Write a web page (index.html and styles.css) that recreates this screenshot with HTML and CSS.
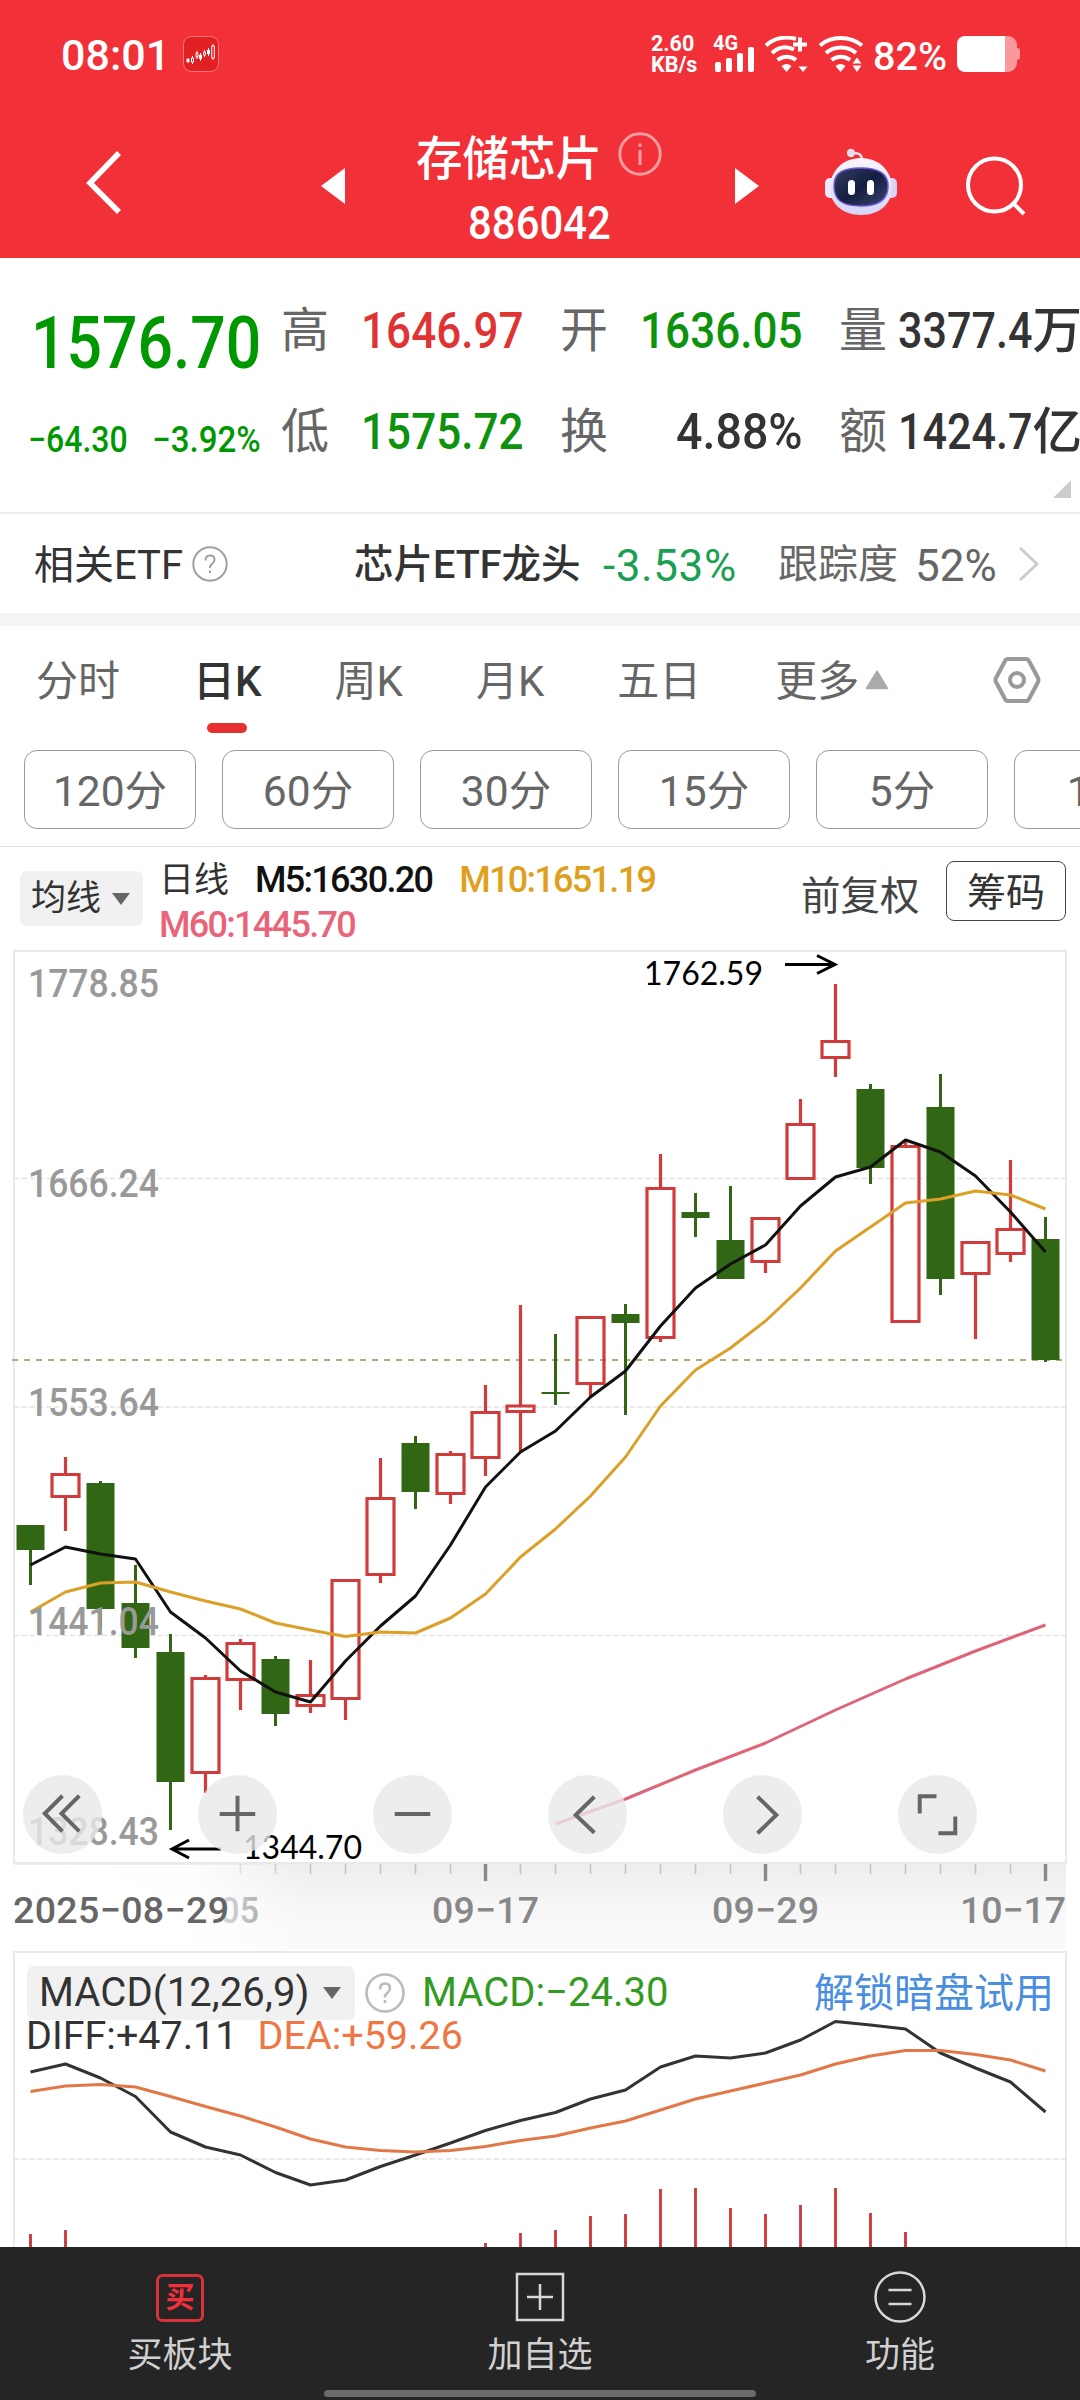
FILE: index.html
```html
<!DOCTYPE html>
<html lang="zh-CN">
<head>
    <meta charset="UTF-8">
    <meta name="viewport" content="width=device-width, initial-scale=1.0">
    <title>存储芯片 886042</title>
    <link rel="stylesheet" href="styles.css">
</head>
<body>
    <header class="header">
        <div class="status">
            <span class="status-time">08:01</span>
            <svg class="status-app" width="36" height="36" viewBox="0 0 36 36">
                <rect x="0.5" y="0.5" width="35" height="35" rx="8" fill="#e21f22" stroke="#f8767a"/>
                <path d="M5 22v5M9.500 20v8M14 15v8M17.500 17v8M21.500 14v7M25.500 12v8M30 8v16" stroke="#fff" stroke-width="1"/>
                <path d="M3.500 23h3v3h-3zM16 19h3v4h-3zM24 14h3v4h-3z" fill="#fff"/>
                <path d="M8.500 22h2v4h-2zM13 17h2v4h-2zM20.500 16h2v3h-2zM28.700 10h2.600v12h-2.600z" fill="#e21f22" stroke="#fff"/>
            </svg>
            <div class="status-right">
                <div class="net-speed"><span>2.60</span><span>KB/s</span></div>
                <div class="mobile">
                    <span class="mobile-type">4G</span>
                    <svg width="42" height="36" viewBox="0 0 42 36" fill="#fff">
                        <rect x="2" y="26" width="6" height="10" rx="2"/>
                        <rect x="13" y="22" width="6" height="14" rx="2"/>
                        <rect x="24" y="17" width="6" height="19" rx="2"/>
                        <rect x="35" y="11" width="6" height="25" rx="2"/>
                    </svg>
                </div>
                <svg class="wifi" width="44" height="36" viewBox="0 0 44 36">
                    <g fill="none" stroke="#fff" stroke-width="4">
                        <path d="M1 9.500C9 1.500 22 0 31 3"/>
                        <path d="M7 17C14 10.500 22 10 29 13.500"/>
                        <path d="M12.500 24C18 19.500 26 19.500 31 24"/>
                        <path d="M35 1.500v14M28 8.500h14"/>
                    </g>
                    <path d="M16.500 30q5-4 10 0l-5 6z" fill="#fff"/>
                    <path d="M33.500 30.500h9l-4.500 5.500z" fill="#fff"/>
                </svg>
                <svg class="wifi" width="44" height="36" viewBox="0 0 44 36">
                    <g fill="none" stroke="#fff" stroke-width="4">
                        <path d="M1 9.500C12-0.500 31-0.500 43 9.500"/>
                        <path d="M7 17C15 9.500 29 9.500 37 17"/>
                        <path d="M12.500 24C18 19.500 26 19.500 31 24"/>
                    </g>
                    <path d="M16.500 30q5-4 10 0l-5 6z" fill="#fff"/>
                    <path d="M33.500 29.500h9l-4.500 6.500zM33.500 27.500h9l-4.500-6z" fill="#fff"/>
                </svg>
                <span class="battery-text">82%</span>
                <svg width="63" height="36" viewBox="0 0 63 36">
                    <path d="M48 0h3a9 9 0 0 1 9 9v3q3 0 3 3v6q0 3-3 3v3a9 9 0 0 1-9 9h-3z" fill="#fa989b"/>
                    <path d="M48 0H8a8 8 0 0 0-8 8v20a8 8 0 0 0 8 8h40z" fill="#fff"/>
                </svg>
            </div>
        </div>
        <nav class="nav">
            <svg class="nav-back" width="38" height="66" viewBox="0 0 38 66"><path d="M33 3L4 33l29 29" fill="none" stroke="#fff" stroke-width="5.500"/></svg>
            <svg class="nav-prev" width="24" height="36" viewBox="0 0 24 36"><path d="M24 0v36L0 18z" fill="#fff"/></svg>
            <div class="nav-title">
                <div class="nav-name">存储芯片
                    <svg width="44" height="44" viewBox="0 0 44 44" fill="none" stroke="#fa9da0" stroke-width="3">
                        <circle cx="22" cy="22" r="20.200"/>
                        <path d="M22 18v15M22 11.500v3.500"/>
                    </svg>
                </div>
                <div class="nav-code"><span class="num">886042</span></div>
            </div>
            <svg class="nav-next" width="24" height="36" viewBox="0 0 24 36"><path d="M0 0v36l24-18z" fill="#fff"/></svg>
            <svg class="nav-robot" width="72" height="68" viewBox="0 0 72 68">
                <defs>
                    <linearGradient id="head" x1="0" y1="0" x2="0" y2="1"><stop offset="0" stop-color="#fbf6fb"/><stop offset="1" stop-color="#d3d6f4"/></linearGradient>
                    <linearGradient id="face" x1="0" y1="0" x2="1" y2="1"><stop offset="0" stop-color="#363c60"/><stop offset="0.500" stop-color="#141e40"/><stop offset="1" stop-color="#3d446e"/></linearGradient>
                </defs>
                <path d="M27 5q10-1 10 7" fill="none" stroke="#f3dfe8" stroke-width="2.500"/>
                <circle cx="26" cy="5" r="4.200" fill="#e9dcec"/>
                <rect x="0" y="30" width="12" height="20" rx="5" fill="#eeeafc"/>
                <rect x="60" y="30" width="12" height="20" rx="5" fill="#d9d3f4"/>
                <path d="M36 10C55 10 67 24 67 40S54 67 36 67 5 56 5 40 17 10 36 10z" fill="url(#head)"/>
                <path d="M36 20C53 20 63 25 63 38S55 58 36 58 9 52 9 38 19 20 36 20z" fill="url(#face)" stroke="#6a58d8" stroke-width="1.500"/>
                <rect x="23" y="32" width="7" height="15" rx="3.500" fill="#fff"/>
                <rect x="42" y="32" width="7" height="15" rx="3.500" fill="#fff"/>
            </svg>
            <svg class="nav-search" width="60" height="62" viewBox="0 0 60 62" fill="none" stroke="#fff" stroke-width="4">
                <circle cx="28.500" cy="31" r="26.500"/>
                <path d="M48 50l10 10"/>
            </svg>
        </nav>
    </header>

    <section class="quote">
        <div class="quote-main">
            <div class="quote-price"><span class="num">1576.70</span></div>
            <div class="quote-change">
                <span class="num">−64.30</span>
                <span class="num">−3.92%</span>
            </div>
        </div>
        <div class="quote-grid">
            <div class="cell"><span class="label">高</span><span class="value up"><span class="num">1646.97</span></span></div>
            <div class="cell"><span class="label">开</span><span class="value down"><span class="num">1636.05</span></span></div>
            <div class="cell"><span class="label">量</span><span class="value"><span class="num narrow">3377.4</span>万</span></div>
            <div class="cell"><span class="label">低</span><span class="value down"><span class="num">1575.72</span></span></div>
            <div class="cell"><span class="label">换</span><span class="value"><span class="num wide">4.88%</span></span></div>
            <div class="cell"><span class="label">额</span><span class="value"><span class="num narrow">1424.7</span>亿</span></div>
        </div>
        <i class="quote-more"></i>
    </section>

    <section class="etf">
        <span class="etf-label">相关ETF</span>
        <svg class="etf-help" width="36" height="36" viewBox="0 0 36 36" fill="none" stroke="#a0a0a0" stroke-width="2">
            <circle cx="18" cy="18" r="16.700"/>
            <path d="M13.500 14.500q0-5 4.500-5t4.500 4.200q0 2.300-2.500 4.300t-2 4M18 24.500v2.500"/>
        </svg>
        <span class="etf-name">芯片ETF龙头</span>
        <span class="etf-rate">-3.53%</span>
        <span class="etf-track">跟踪度</span>
        <span class="etf-percent">52%</span>
        <svg class="etf-arrow" width="22" height="36" viewBox="0 0 22 36"><path d="M2 2l17 16L2 34" fill="none" stroke="#ccc" stroke-width="3"/></svg>
    </section>

    <section class="tabs">
        <span class="tab">分时</span>
        <span class="tab active">日K</span>
        <span class="tab">周K</span>
        <span class="tab">月K</span>
        <span class="tab">五日</span>
        <span class="tab tab-more">更多<svg width="24" height="20" viewBox="0 0 22 19"><path d="M11 1l10 16.500H1z" fill="#aaa" stroke="#aaa" stroke-width="1.500" stroke-linejoin="round"/></svg></span>
        <svg class="tabs-setting" width="50" height="48" viewBox="0 0 50 48" fill="none" stroke="#999" stroke-width="4" stroke-linejoin="round">
            <path d="M16 3h18q2 0 3 2l9 17q1 2 0 4l-9 17q-1 2-3 2H16q-2 0-3-2L4 26q-1-2 0-4l9-17q1-2 3-2z"/>
            <circle cx="25" cy="24" r="7"/>
        </svg>
    </section>

    <section class="periods">
        <span class="period">120分</span>
        <span class="period">60分</span>
        <span class="period">30分</span>
        <span class="period">15分</span>
        <span class="period">5分</span>
        <span class="period">1分</span>
    </section>

    <section class="ma">
        <div class="ma-select">均线<i class="caret"></i></div>
        <div class="ma-values">
            <span class="ma-title">日线</span><span class="m5">M5:1630.20</span><span class="m10">M10:1651.19</span>
            <br>
            <span class="m60">M60:1445.70</span>
        </div>
        <span class="ma-adjust">前复权</span>
        <span class="ma-chip">筹码</span>
    </section>

    <section class="kline">
        <svg class="chart" width="1080" height="1001" viewBox="0 950 1080 1001">
            <defs>
                <linearGradient id="axisDown" x1="0" y1="0" x2="0" y2="1"><stop offset="0" stop-color="#ededed"/><stop offset="0.500" stop-color="#f7f7f7"/><stop offset="1" stop-color="#fbfbfb"/></linearGradient>
                <linearGradient id="axisFade" x1="0" y1="0" x2="1" y2="0"><stop offset="0" stop-color="#fff"/><stop offset="0.600" stop-color="#fff" stop-opacity="0.950"/><stop offset="1" stop-color="#fff" stop-opacity="0"/></linearGradient>
            </defs>
            <rect class="frame" x="14" y="951" width="1052" height="912"/>
            <path class="grid" d="M14 1178.500H1066M14 1407H1066M14 1635.500H1066"/>
            <path class="last-price" d="M12 1360H1066"/>

            <!-- 阴线 -->
            <path class="fall-wick" d="M30.500 1550V1585M100.500 1481V1628M135.500 1565V1658M170.500 1634V1830M275.500 1656V1726M415.500 1436V1509M555.500 1334V1405M625.500 1304V1415M695.500 1193V1237M730.500 1186V1279M870.500 1084V1184M940.500 1074V1295M1045.500 1217V1362"/>
            <path class="fall-body" d="M16.500 1525h28v25h-28zM86.500 1483h28v126h-28zM121.500 1603h28v45h-28zM156.500 1652h28v130h-28zM261.500 1659h28v55h-28zM401.500 1443h28v49h-28zM541.500 1392h28v2h-28zM611.500 1314h28v9h-28zM681.500 1212h28v6h-28zM716.500 1240h28v39h-28zM856.500 1089h28v79h-28zM926.500 1107h28v172h-28zM1031.500 1239h28v121h-28z"/>
            <!-- 阳线 -->
            <path class="rise" d="M65.500 1457V1473M65.500 1498V1531M205.500 1675V1678M205.500 1774V1793M240.500 1639V1642M240.500 1681V1710M310.500 1660V1694M310.500 1707V1713M345.500 1700V1720M380.500 1458V1497M380.500 1576V1583M450.500 1451V1453M450.500 1495V1504M485.500 1385V1411M485.500 1458V1476M520.500 1305V1405M520.500 1413V1452M590.500 1385V1397M660.500 1154V1187M660.500 1339V1342M765.500 1263V1273M800.500 1099V1123M835.500 984V1040M835.500 1059V1077M905.500 1141V1145M975.500 1274V1339M1010.500 1160V1228M1010.500 1255V1262"/>
            <path class="rise" d="M52 1474.500h27v22h-27zM192 1678.500h27v94h-27zM227 1643.500h27v36h-27zM297 1695.500h27v10h-27zM332 1580.500h27v118h-27zM367 1498.500h27v76h-27zM437 1454.500h27v39h-27zM472 1412.500h27v45h-27zM507 1406h27v5.500h-27zM577 1317.500h27v66h-27zM647 1188.500h27v149h-27zM752 1218.500h27v43h-27zM787 1124.500h27v54h-27zM822 1041.500h27v16h-27zM892 1146.500h27v175h-27zM962 1242.500h27v31h-27zM997 1229.500h27v24h-27z"/>

            <polyline class="line ma5-line" points="30.500,1565 65.500,1547 100.500,1554 135.500,1559 170.500,1612 205.500,1638 240.500,1671 275.500,1692 310.500,1702 345.500,1661 380.500,1626 415.500,1596 450.500,1545 485.500,1487 520.500,1452 555.500,1431 590.500,1397 625.500,1371 660.500,1326 695.500,1288 730.500,1264 765.500,1245 800.500,1206 835.500,1177 870.500,1167 905.500,1140 940.500,1152 975.500,1176 1010.500,1212 1045.500,1252"/>
            <polyline class="line ma10-line" points="30.500,1612 65.500,1592 100.500,1583 135.500,1582 170.500,1592 205.500,1601 240.500,1609 275.500,1623 310.500,1630 345.500,1636.500 380.500,1632 415.500,1633 450.500,1618 485.500,1594 520.500,1557 555.500,1529 590.500,1496 625.500,1457 660.500,1406 695.500,1370 730.500,1348 765.500,1321 800.500,1288 835.500,1251 870.500,1227 905.500,1203 940.500,1199 975.500,1191 1010.500,1195 1045.500,1209"/>
            <polyline class="line ma60-line" points="555.500,1824 625.500,1799 695.500,1770 765.500,1743 835.500,1710 905.500,1679 975.500,1651 1045.500,1625"/>

            <g class="scale">
                <text x="28" y="997" textLength="131" lengthAdjust="spacingAndGlyphs">1778.85</text>
                <text x="28" y="1197" textLength="131" lengthAdjust="spacingAndGlyphs">1666.24</text>
                <text x="28" y="1415.500" textLength="131" lengthAdjust="spacingAndGlyphs">1553.64</text>
                <text x="28" y="1634.500" textLength="131" lengthAdjust="spacingAndGlyphs">1441.04</text>
                <text x="28" y="1844.500" textLength="131" lengthAdjust="spacingAndGlyphs">1328.43</text>
            </g>
            <g class="extreme">
                <text x="644" y="985" textLength="119" lengthAdjust="spacingAndGlyphs">1762.59</text>
                <text x="243" y="1858.500" textLength="119" lengthAdjust="spacingAndGlyphs">1344.70</text>
                <path d="M785 964.500H835M817 955.500L835 964.500L817 973.500M221 1849H172M189 1840L172 1849L189 1858"/>
            </g>

            <!-- 日期轴 -->
            <rect x="14" y="1864" width="1052" height="86" fill="url(#axisDown)"/>
            <path class="tick" d="M240.500 1864v10M275.500 1864v10M310.500 1864v10M345.500 1864v10M380.500 1864v10M415.500 1864v10M450.500 1864v10M520.500 1864v10M555.500 1864v10M590.500 1864v10M625.500 1864v10M660.500 1864v10M695.500 1864v10M730.500 1864v10M800.500 1864v10M835.500 1864v10M870.500 1864v10M905.500 1864v10M940.500 1864v10M975.500 1864v10M1010.500 1864v10"/>
            <path class="tick-main" d="M485.500 1864v17M765.500 1864v17M1045.500 1864v17"/>
            <g class="date">
                <text x="220" y="1922.500" textLength="39" lengthAdjust="spacingAndGlyphs">05</text>
                <text x="432" y="1922.500" textLength="107" lengthAdjust="spacing">09−17</text>
                <text x="712" y="1922.500" textLength="107" lengthAdjust="spacing">09−29</text>
                <text x="960" y="1922.500" textLength="106" lengthAdjust="spacing">10−17</text>
            </g>
            <rect x="12" y="1865" width="290" height="85" fill="url(#axisFade)"/>
            <text class="date-first" x="13" y="1922.500" textLength="216" lengthAdjust="spacing">2025−08−29</text>
        </svg>
        <div class="controls">
            <button class="control"><svg viewBox="0 0 80 80"><path d="M40 21L22 39l18 18M57 21L39 39l18 18"/></svg></button>
            <button class="control"><svg viewBox="0 0 80 80"><path d="M22 39.500h36M40 21v36"/></svg></button>
            <button class="control"><svg viewBox="0 0 80 80"><path d="M22 39.500h36"/></svg></button>
            <button class="control"><svg viewBox="0 0 80 80"><path d="M47 22L28 40.500l19 18"/></svg></button>
            <button class="control"><svg viewBox="0 0 80 80"><path d="M35 22l19 18.500L35 59"/></svg></button>
            <button class="control"><svg viewBox="0 0 80 80"><path d="M39 21.500H22V39M58 42v17H41"/></svg></button>
        </div>
    </section>

    <section class="macd">
        <div class="macd-head">
            <div class="macd-select">MACD(12,26,9)<i class="caret"></i></div>
            <svg class="macd-help" width="40" height="40" viewBox="0 0 40 40" fill="none" stroke="#bbb" stroke-width="2.600">
                <circle cx="20" cy="20" r="18.500"/>
                <path d="M15 16.500q0-6 5-6t5 4.700q0 2.500-2.700 4.800t-2.300 4.500M20 27v3"/>
            </svg>
            <span class="macd-value">MACD:−24.30</span>
            <span class="macd-link">解锁暗盘试用</span>
        </div>
        <div class="macd-sub"><span>DIFF:+47.11</span><span class="dea">DEA:+59.26</span></div>
        <svg class="macd-chart" width="1080" height="296" viewBox="0 1951 1080 296">
            <path class="frame" d="M14 2247V1952H1066V2247"/>
            <path class="grid" d="M14 2159H1066"/>
            <path class="bars" d="M30.500 2234V2247M65.500 2230V2247M485.500 2243V2247M520.500 2233V2247M555.500 2230V2247M590.500 2216V2247M625.500 2214V2247M660.500 2189V2247M695.500 2188V2247M730.500 2208V2247M765.500 2214V2247M800.500 2205V2247M835.500 2188V2247M870.500 2213V2247M905.500 2232V2247"/>
            <polyline class="line diff-line" points="30.500,2072 65.500,2064 100.500,2078 135.500,2096.500 170.500,2132 205.500,2147 240.500,2155 275.500,2172.500 310.500,2185 345.500,2180 380.500,2166.500 415.500,2155 450.500,2143 485.500,2130.500 520.500,2120.500 555.500,2112.500 590.500,2099 625.500,2090 660.500,2067 695.500,2056 730.500,2058 765.500,2053 800.500,2040 835.500,2021.500 870.500,2025 905.500,2029 940.500,2053 975.500,2068 1010.500,2082 1045.500,2112"/>
            <polyline class="line dea-line" points="30.500,2091.500 65.500,2086 100.500,2084.500 135.500,2087 170.500,2096.500 205.500,2106.500 240.500,2116 275.500,2127 310.500,2139 345.500,2147 380.500,2150.500 415.500,2152 450.500,2150.500 485.500,2146.500 520.500,2140.500 555.500,2136 590.500,2128 625.500,2121 660.500,2110 695.500,2099 730.500,2091 765.500,2083 800.500,2075 835.500,2064 870.500,2056 905.500,2050.500 940.500,2050.500 975.500,2054.500 1010.500,2060 1045.500,2071"/>
        </svg>
    </section>

    <footer class="footer">
        <div class="footer-item">
            <svg width="52" height="52" viewBox="0 0 52 52">
                <rect x="3.500" y="4.500" width="45" height="45" rx="5" fill="none" stroke="#d8323a" stroke-width="3"/>
                <text class="buy-icon" x="26" y="37" text-anchor="middle">买</text>
            </svg>
            <span>买板块</span>
        </div>
        <div class="footer-item">
            <svg width="52" height="52" viewBox="0 0 52 52" fill="none" stroke="#d8d8d8" stroke-width="2.500">
                <rect x="3" y="3" width="46" height="46"/>
                <path d="M26 13v26M13 26h26"/>
            </svg>
            <span>加自选</span>
        </div>
        <div class="footer-item">
            <svg width="52" height="52" viewBox="0 0 52 52" fill="none" stroke="#d8d8d8" stroke-width="2.500">
                <circle cx="26" cy="26" r="24.500"/>
                <path d="M14.500 19h23M14.500 33h23"/>
            </svg>
            <span>功能</span>
        </div>
        <i class="home-bar"></i>
    </footer>
</body>
</html>
```
FILE: styles.css
```css
/* 全局 */
* {
    box-sizing: border-box;
}

body {
    width: 1080px;
    height: 2400px;
    margin: 0;
    overflow: hidden;
    background: #fff;
    color: #333;
    font-family: Roboto, "Noto Sans CJK SC", sans-serif;
    font-size: 40px;
    white-space: nowrap;
}

svg {
    display: block;
    flex: none;
}

/* 窄体数字 */
.num {
    display: inline-block;
    transform: scaleX(0.87);
    transform-origin: left;
}

/* 顶部 */
.header {
    height: 258px;
    background: #f23037;
    color: #fff;
}

.status {
    display: flex;
    align-items: center;
    height: 108px;
    padding: 0 60px 0 61px;
}

.status-time {
    width: 122px;
    padding-top: 2px;
    font-size: 43px;
    font-weight: 500;
}

.status-right {
    display: flex;
    align-items: center;
    margin-left: auto;
}

.net-speed {
    display: flex;
    flex-direction: column;
    width: 62px;
    font-size: 21.5px;
    font-weight: 700;
    line-height: 21px;
}

.mobile {
    position: relative;
    margin-right: 10px;
}

.mobile-type {
    position: absolute;
    left: 0;
    top: -3px;
    font-size: 20px;
    font-weight: 700;
    line-height: 20px;
}

.wifi {
    margin-right: 10px;
}

.battery-text {
    width: 84px;
    padding-top: 4px;
    font-size: 39.5px;
    font-weight: 500;
}

.nav {
    display: flex;
    align-items: center;
    height: 150px;
}

.nav-back {
    margin-left: 86px;
}

.nav-prev {
    margin-left: 197px;
    margin-top: 5px;
}

.nav-title {
    width: 246px;
    margin: 0 73px 0 71px;
    padding-top: 4px;
    text-align: center;
    font-weight: 500;
}

.nav-name {
    display: flex;
    align-items: center;
    justify-content: space-between;
    height: 56px;
    font-size: 46.5px;
}

.nav-code {
    height: 62px;
    font-size: 46px;
    line-height: 82px;
}

.nav-code .num {
    transform: scaleX(0.91);
    transform-origin: center;
}

.nav-next {
    margin-top: 5px;
}

.nav-robot {
    margin-left: 66px;
    margin-top: -2px;
}

.nav-search {
    margin-left: 69px;
    margin-top: 3px;
}

/* 行情 */
.quote {
    position: relative;
    display: flex;
    height: 256px;
    padding-top: 36px;
    border-bottom: 2px solid #ededed;
}

.quote-main {
    width: 281px;
    padding-left: 28px;
    color: #009800;
}

.quote-price {
    height: 94px;
    padding-left: 3px;
    font-size: 73px;
    font-weight: 500;
    line-height: 98px;
}

.quote-price .num {
    transform: scaleX(0.855);
}

.quote-change {
    display: flex;
    font-size: 36px;
    font-weight: 500;
    line-height: 105px;
}

.quote-change .num {
    width: 124px;
    transform: scaleX(0.89);
}

.quote-change .num + .num {
    transform: scaleX(0.92);
}

.quote-grid {
    display: grid;
    grid-template-columns: 243px 243px 243px;
    grid-auto-rows: 101px;
    column-gap: 36px;
}

.cell {
    display: flex;
    justify-content: space-between;
    font-size: 48px;
    line-height: 74px;
}

.label {
    width: 20px;
    color: #666;
}

.value {
    font-weight: 500;
    font-size: 49.5px;
}

.value .num {
    transform: scaleX(0.89);
    transform-origin: right;
}

.value .narrow {
    transform: scaleX(0.87);
}

.value .wide {
    transform: scaleX(0.94);
}

.up {
    color: #e03434;
}

.down {
    color: #0c920c;
}

.quote-more {
    position: absolute;
    right: 9px;
    bottom: 14px;
    border-left: 18px solid transparent;
    border-bottom: 18px solid #ccc;
}

/* 相关ETF */
.etf {
    display: flex;
    align-items: center;
    height: 112px;
    padding-left: 34px;
    border-bottom: 13px solid #f4f4f4;
    line-height: 50px;
}

.etf-label {
    width: 158px;
    padding-top: 4px;
}

.etf-help {
    width: 162px;
    height: 36px;
    padding-right: 126px;
}

.etf-name {
    width: 249px;
    padding-top: 3px;
    font-size: 39.5px;
    font-weight: 500;
}

.etf-rate {
    width: 175px;
    padding-top: 5px;
    color: #1aa053;
    font-size: 44px;
    letter-spacing: 0.6px;
}

.etf-track {
    width: 137px;
    padding-top: 3px;
    color: #666;
}

.etf-percent {
    width: 103px;
    padding-top: 5px;
    color: #666;
    font-size: 44px;
}

/* 周期切换 */
.tabs {
    display: flex;
    align-items: center;
    height: 108px;
    padding: 0 38px 0 36px;
    color: #666;
    font-size: 42px;
    line-height: 60px;
}

.tab {
    position: relative;
    margin-right: 73px;
    padding-top: 3px;
}

.tab-more {
    display: flex;
    align-items: center;
    gap: 6px;
    margin-right: 0;
    margin-left: 1px;
}

.tab-more svg {
    margin-top: -4px;
}

.active {
    color: #333;
    font-weight: 500;
}

.active::after {
    content: "";
    position: absolute;
    left: 14px;
    bottom: -21px;
    width: 40px;
    height: 10px;
    border-radius: 5px;
    background: #e62f2f;
}

.tabs-setting {
    margin-left: auto;
}

.periods {
    display: flex;
    gap: 26px;
    height: 113px;
    padding: 16px 0 0 24px;
    border-bottom: 1px solid #e4e4e4;
    overflow: hidden;
}

.period {
    flex: none;
    width: 172px;
    height: 79px;
    border: 1px solid #999;
    border-radius: 13px;
    color: #666;
    font-size: 42.5px;
    line-height: 82px;
    text-align: center;
}

/* 均线 */
.ma {
    display: flex;
    height: 103px;
    padding-left: 20px;
}

.caret {
    border: 9px solid transparent;
    border-top: 12px solid #666;
    border-bottom: 0;
}

.ma-select {
    display: flex;
    align-items: center;
    gap: 11px;
    width: 123px;
    height: 55px;
    margin-top: 24px;
    padding-left: 11px;
    border-radius: 7px;
    background: #f1f1f1;
    font-size: 35px;
    line-height: 58px;
}

.ma-values {
    width: 658px;
    padding: 11px 0 0 16px;
    font-size: 36px;
    line-height: 45px;
    letter-spacing: -1.7px;
    font-weight: 500;
}

.ma-title {
    margin-right: 26px;
    font-size: 35px;
    font-weight: 400;
    letter-spacing: 0;
}

.m5 {
    margin-right: 27px;
    color: #111;
}

.m10 {
    color: #dfa020;
}

.m60 {
    color: #e96478;
}

.ma-adjust {
    width: 145px;
    color: #444;
    font-size: 39.5px;
    line-height: 99px;
}

.ma-chip {
    width: 120px;
    height: 60px;
    margin-top: 14px;
    border: 1px solid #444;
    border-radius: 8px;
    font-size: 39px;
    line-height: 62px;
    text-align: center;
}

/* K线图 */
.kline {
    position: relative;
    height: 1001px;
}

.frame {
    fill: none;
    stroke: #e9e9e9;
    stroke-width: 2;
}

.grid {
    stroke: #e2e2e2;
    stroke-width: 1.3;
    stroke-dasharray: 5 3;
}

.last-price {
    stroke: #b9a683;
    stroke-width: 2;
    stroke-dasharray: 6 6;
}

.fall-wick {
    stroke: #306614;
    stroke-width: 3;
}

.fall-body {
    fill: #306614;
}

.rise {
    fill: none;
    stroke: #d03c3c;
    stroke-width: 3.2;
}

.line {
    fill: none;
    stroke-width: 3;
    stroke-linejoin: round;
}

.ma5-line {
    stroke: #111;
}

.ma10-line {
    stroke: #dca028;
}

.ma60-line {
    stroke: #e06478;
}

.scale {
    fill: #999;
    font-size: 38px;
    font-weight: 500;
}

.extreme {
    fill: #000;
    font-family: Lato, sans-serif;
    font-size: 33px;
}

.extreme path {
    fill: none;
    stroke: #000;
    stroke-width: 3;
}

.tick {
    stroke: #c4c4c4;
    stroke-width: 1.6;
}

.tick-main {
    stroke: #888;
    stroke-width: 3.4;
}

.date {
    fill: #888;
    font-size: 37.5px;
    font-weight: 500;
}

.date-first {
    fill: #666;
    font-size: 37.5px;
    font-weight: 500;
}

.controls {
    position: absolute;
    left: 23px;
    top: 825px;
    display: flex;
    gap: 96px;
}

.control {
    width: 79px;
    height: 79px;
    padding: 0;
    border: 0;
    border-radius: 50%;
    background: rgba(232, 232, 232, 0.8);
}

.control path {
    fill: none;
    stroke: #666;
    stroke-width: 4;
}

/* MACD */
.macd {
    position: relative;
    height: 296px;
}

.macd-chart {
    position: absolute;
    left: 0;
    top: 0;
    z-index: -1;
}

.macd-head {
    display: flex;
    align-items: center;
    padding: 12px 26px 0 27px;
    line-height: 57px;
}

.macd-select {
    display: flex;
    align-items: center;
    gap: 13px;
    width: 328px;
    height: 54px;
    padding-left: 12px;
    border-radius: 7px;
    background: #f1f1f1;
    letter-spacing: 0.1px;
}

.macd-help {
    margin: 0 17px 0 10px;
}

.macd-value {
    color: #339a22;
}

.macd-link {
    margin-left: auto;
    padding-top: 2px;
    color: #4a8ee0;
}

.macd-sub {
    display: flex;
    gap: 20px;
    padding-left: 26px;
    font-size: 39.5px;
    line-height: 28px;
}

.dea {
    color: #ef7745;
}

.diff-line {
    stroke: #333;
}

.dea-line {
    stroke: #e27848;
}

.bars {
    stroke: #cc3636;
    stroke-width: 2.8;
}

/* 底部 */
.footer {
    position: relative;
    display: grid;
    grid-template-columns: 1fr 1fr 1fr;
    height: 153px;
    padding-top: 24px;
    background: #252525;
}

.footer-item {
    display: flex;
    flex-direction: column;
    align-items: center;
    gap: 8px;
    color: #d0d0d0;
    font-size: 35px;
    line-height: 50px;
}

.buy-icon {
    fill: #f0303c;
    font-size: 29px;
    font-weight: 700;
}

.home-bar {
    position: absolute;
    left: 324px;
    bottom: 3px;
    width: 432px;
    height: 7px;
    border-radius: 4px;
    background: #6b6b6b;
}
```
